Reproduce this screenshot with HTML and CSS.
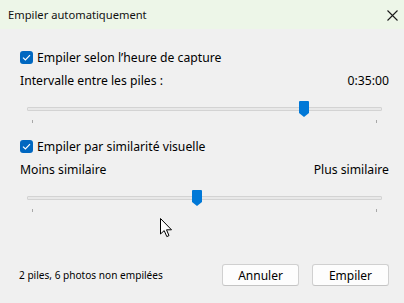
FILE: index.html
```html
<!DOCTYPE html>
<html lang="fr">
<head>
<meta charset="utf-8">
<title>Empiler automatiquement</title>
<link rel="stylesheet" href="styles.css">
</head>
<body>
<div class="dialog">
  <div class="titlebar">
    <span class="title">Empiler automatiquement</span>
    <svg class="close" width="11" height="11" viewBox="0 0 11 11"><path d="M0.5 0.5 L10.5 10.5 M10.5 0.5 L0.5 10.5" stroke="#1a1a1a" stroke-width="1.1" fill="none"/></svg>
  </div>
  <div class="content">
    <label class="check-row">
      <span class="checkbox"><svg width="9" height="7" viewBox="0 0 9 7"><path d="M1 3.6 L3.4 6 L8 1.2" stroke="#fff" stroke-width="1.2" fill="none"/></svg></span>
      <span>Empiler selon l’heure de capture</span>
    </label>
    <div class="label-row">
      <span>Intervalle entre les piles :</span>
      <span>0:35:00</span>
    </div>
    <div class="slider">
      <div class="track"></div>
      <svg class="thumb" style="left:78%" width="10" height="16" viewBox="0 0 10 16"><path d="M0 1 Q0 0 1 0 H9 Q10 0 10 1 V12 L5 16 L0 12 Z" fill="#0078d7"/></svg>
      <div class="ticks"><span></span><span></span></div>
    </div>
    <label class="check-row second">
      <span class="checkbox"><svg width="9" height="7" viewBox="0 0 9 7"><path d="M1 3.6 L3.4 6 L8 1.2" stroke="#fff" stroke-width="1.2" fill="none"/></svg></span>
      <span>Empiler par similarité visuelle</span>
    </label>
    <div class="label-row">
      <span>Moins similaire</span>
      <span>Plus similaire</span>
    </div>
    <div class="slider">
      <div class="track"></div>
      <svg class="thumb" style="left:48%" width="10" height="16" viewBox="0 0 10 16"><path d="M0 1 Q0 0 1 0 H9 Q10 0 10 1 V12 L5 16 L0 12 Z" fill="#0078d7"/></svg>
      <div class="ticks"><span></span><span></span></div>
    </div>
  </div>
  <div class="footer">
    <span class="status">2 piles, 6 photos non empilées</span>
    <div class="buttons">
      <button class="btn">Annuler</button>
      <button class="btn">Empiler</button>
    </div>
  </div>
  <svg class="cursor" width="13" height="20" viewBox="0 0 13 20"><path d="M0.5 0.5 V16 L4.2 12.6 L6.8 18.6 L9 17.6 L6.5 11.8 L11.5 11.8 Z" fill="#fff" stroke="#000" stroke-width="1"/></svg>
</div>
</body>
</html>
```
FILE: styles.css
```css
* { box-sizing: border-box; }
html, body { margin: 0; padding: 0; }
body {
  width: 404px;
  height: 303px;
  overflow: hidden;
  background: #f0f0f0;
  font-family: "Noto Sans", "Open Sans", sans-serif;
  font-size: 12.2px;
  color: #000;
}
.dialog {
  position: relative;
  width: 404px;
  height: 303px;
  display: flex;
  flex-direction: column;
}
.titlebar {
  height: 29px;
  background: #edf6e8;
  display: flex;
  align-items: center;
  justify-content: space-between;
  padding: 0 6px 0 8px;
  flex-shrink: 0;
}
.title { font-size: 11.2px; color: #111; }
.close { margin-top: 1px; }
.content {
  padding: 20px 15px 0 20px;
  display: flex;
  flex-direction: column;
}
.check-row {
  display: flex;
  align-items: center;
  gap: 4px;
  height: 16px;
}
.check-row.second { margin-top: 13px; }
.checkbox {
  width: 13px;
  height: 13px;
  border-radius: 3px;
  background: #0067c0;
  display: flex;
  align-items: center;
  justify-content: center;
}
.label-row {
  display: flex;
  justify-content: space-between;
  height: 16px;
  align-items: center;
  margin-top: 7px;
}
.slider {
  position: relative;
  height: 26px;
  margin: 11px 7px 0 7px;
}
.track {
  position: absolute;
  left: 0;
  right: 0;
  top: 8px;
  height: 4px;
  background: #e8e8e8;
  border: 1px solid #d3d3d3;
  border-radius: 1px;
}
.thumb {
  position: absolute;
  top: 2px;
  margin-left: -5px;
}
.ticks {
  position: absolute;
  left: 5px;
  right: 5px;
  top: 21px;
  display: flex;
  justify-content: space-between;
}
.ticks span {
  width: 1px;
  height: 3px;
  background: #a8a8a8;
}
.footer {
  margin-top: auto;
  height: 60px;
  display: flex;
  align-items: center;
  justify-content: space-between;
  padding: 0 15px 0 19px;
}
.status { font-size: 10.1px; margin-top: 4px; }
.buttons { display: flex; gap: 13px; margin-top: 4px; }
.btn {
  width: 77px;
  height: 22px;
  background: #fdfdfd;
  border: 1px solid #d0d0d0;
  border-bottom-color: #c4c4c4;
  border-radius: 3px;
  font-family: inherit;
  font-size: 12px;
  color: #000;
  padding: 0;
}
.cursor {
  position: absolute;
  left: 160px;
  top: 218px;
}
```
